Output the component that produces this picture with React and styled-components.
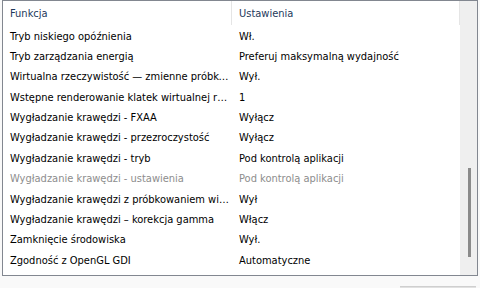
import React from "react";
import styled, { createGlobalStyle } from "styled-components";

const rows = [
  { name: "Tryb niskiego opóźnienia", value: "Wł." },
  { name: "Tryb zarządzania energią", value: "Preferuj maksymalną wydajność" },
  { name: "Wirtualna rzeczywistość — zmienne próbkowanie", value: "Wył." },
  { name: "Wstępne renderowanie klatek wirtualnej rzeczywistości", value: "1" },
  { name: "Wygładzanie krawędzi - FXAA", value: "Wyłącz" },
  { name: "Wygładzanie krawędzi - przezroczystość", value: "Wyłącz" },
  { name: "Wygładzanie krawędzi - tryb", value: "Pod kontrolą aplikacji" },
  { name: "Wygładzanie krawędzi - ustawienia", value: "Pod kontrolą aplikacji", disabled: true },
  { name: "Wygładzanie krawędzi z próbkowaniem wielokrotnym", value: "Wył" },
  { name: "Wygładzanie krawędzi – korekcja gamma", value: "Włącz" },
  { name: "Zamknięcie środowiska", value: "Wył." },
  { name: "Zgodność z OpenGL GDI", value: "Automatyczne" },
];

const GlobalStyle = createGlobalStyle`
  body {
    margin: 0;
    background: #f9f9f9;
    font-family: "DejaVu Sans Condensed", "DejaVu Sans", Tahoma, sans-serif;
    font-size: 11px;
  }
`;

const Page = styled.div`
  width: 480px;
  height: 288px;
  overflow: hidden;
  display: flex;
  flex-direction: column;
`;

const ListBox = styled.div`
  margin-left: 2px;
  width: 476px;
  height: 276px;
  box-sizing: border-box;
  border: 1px solid #828790;
  background: #fff;
  display: flex;
`;

const List = styled.div`
  flex: 1;
  display: flex;
  flex-direction: column;
`;

const Header = styled.div`
  height: 25px;
  display: flex;
  color: #1e395b;
`;

const HeaderCell = styled.div`
  width: ${(p) => p.$w}px;
  box-sizing: border-box;
  padding-left: 7px;
  display: flex;
  align-items: center;
  border-right: 1px solid #e5e5e5;
  height: 24px;
`;

const Row = styled.div`
  height: 20.36px;
  display: flex;
  align-items: center;
  color: ${(p) => (p.$disabled ? "#8d8d8d" : "#000")};
`;

const Cell = styled.div`
  width: ${(p) => p.$w}px;
  box-sizing: border-box;
  padding-left: 7px;
  padding-right: 3px;
  white-space: nowrap;
  overflow: hidden;
  text-overflow: ellipsis;
`;

const ScrollTrack = styled.div`
  width: 17px;
  background: #efefef;
  display: flex;
  justify-content: center;
  padding-top: 167px;
  box-sizing: border-box;
`;

const Thumb = styled.div`
  width: 3px;
  height: 89px;
  background: #8b8b8b;
  margin-left: 1px;
`;

const Footer = styled.div`
  flex: 1;
  display: flex;
  justify-content: flex-end;
  align-items: flex-end;
  padding-right: 4px;
`;

const Button = styled.div`
  width: 76px;
  height: 1px;
  border-top: 1px solid #cfcfcf;
  background: #e1e1e1;
`;

export default function App() {
  return (
    <Page>
      <GlobalStyle />
      <ListBox>
        <List>
          <Header>
            <HeaderCell $w={229}>Funkcja</HeaderCell>
            <HeaderCell $w={228}>Ustawienia</HeaderCell>
          </Header>
          {rows.map((r) => (
            <Row key={r.name} $disabled={r.disabled}>
              <Cell $w={229}>{r.name}</Cell>
              <Cell $w={228}>{r.value}</Cell>
            </Row>
          ))}
        </List>
        <ScrollTrack>
          <Thumb />
        </ScrollTrack>
      </ListBox>
      <Footer>
        <Button />
      </Footer>
    </Page>
  );
}
